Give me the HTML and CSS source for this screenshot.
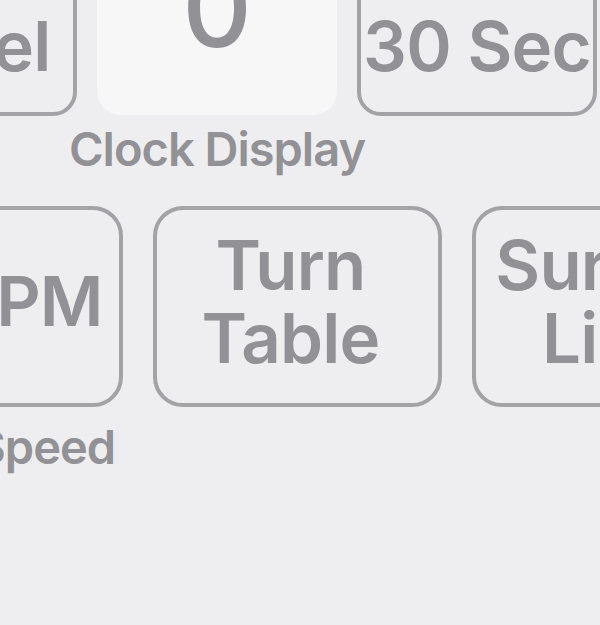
FILE: index.html
```html
<!DOCTYPE html>
<html lang="en">
<head>
<meta charset="utf-8">
<title>Microwave Panel</title>
<link rel="stylesheet" href="styles.css">
</head>
<body>
<div class="panel">
  <div class="row row-top">
    <div class="col">
      <div class="key key-top key-cancel"><span>Clear<br>Cancel</span></div>
    </div>
    <div class="col">
      <div class="display"><span class="digit">0</span></div>
      <div class="label label-top">Clock Display</div>
    </div>
    <div class="col">
      <div class="key key-top"><span>Add<br>30 Sec</span></div>
    </div>
  </div>
  <div class="row row-bottom">
    <div class="col col-wide">
      <div class="key key-bottom key-rpm"><span>10 RPM</span></div>
      <div class="label label-bottom label-speed">Turntable Speed</div>
    </div>
    <div class="col col-wide">
      <div class="key key-bottom"><span>Turn<br>Table</span></div>
    </div>
    <div class="col col-wide">
      <div class="key key-bottom key-light"><span>Surface<br>Light</span></div>
    </div>
  </div>
</div>
</body>
</html>
```

FILE: styles.css
```css
html, body {
  margin: 0;
  padding: 0;
  width: 600px;
  height: 625px;
  overflow: hidden;
  background: #eeeef0;
}

body {
  font-family: Inter, "Open Sans", "Liberation Sans", sans-serif;
  color: #929196;
}

.panel {
  margin: -87px 0 0 -166px;
  width: 1000px;
}

.row {
  display: flex;
}

.row-top {
  gap: 20px;
  padding-left: 3px;
}

.row-bottom {
  gap: 30px;
  margin-top: 29px;
}

.col {
  width: 240px;
  display: flex;
  flex-direction: column;
  align-items: stretch;
}

.col-wide {
  width: 289px;
}

.key {
  box-sizing: border-box;
  border: 4px solid #a3a2a7;
  display: flex;
  align-items: center;
  justify-content: center;
  text-align: center;
  font-weight: 600;
  font-size: 69px;
  line-height: 73px;
  letter-spacing: -0.8px;
  white-space: nowrap;
}

.key-top {
  height: 203px;
  border-radius: 24px;
  padding-bottom: 10px;
}

.key-cancel {
  padding-right: 40px;
}

.key-bottom {
  height: 201px;
  border-radius: 30px;
  padding-bottom: 10px;
  padding-right: 14px;
}

.key-rpm {
  padding-right: 0;
  padding-left: 8px;
}

.key-light {
  padding-right: 0;
  padding-left: 14px;
}

.display {
  box-sizing: border-box;
  height: 202px;
  border-radius: 24px;
  background: #f7f7f8;
  display: flex;
  justify-content: center;
  padding-top: 41px;
}

.digit {
  font-size: 108px;
  line-height: 108px;
  font-weight: 500;
}

.label {
  display: flex;
  justify-content: center;
  font-size: 47px;
  line-height: 56px;
  font-weight: 600;
  letter-spacing: -1px;
  white-space: nowrap;
}

.label-top {
  margin-top: 6px;
}

.label-bottom {
  margin-top: 12px;
}

.label-speed {
  padding-right: 86px;
}
```
